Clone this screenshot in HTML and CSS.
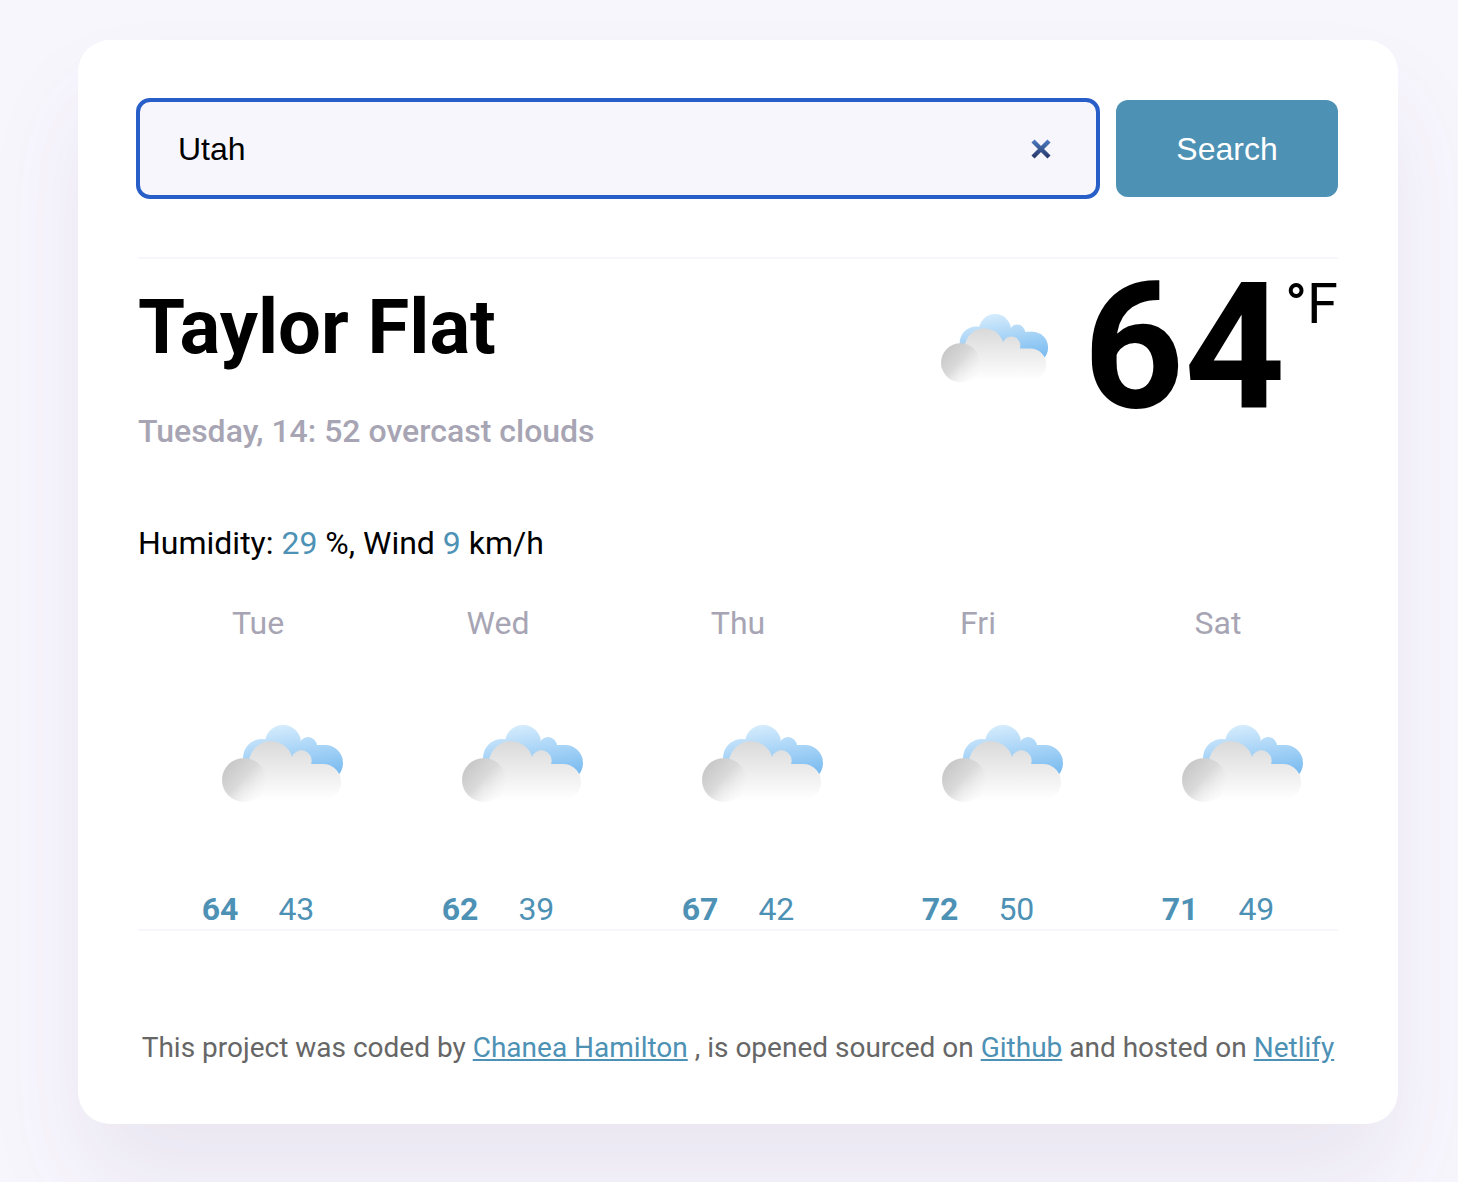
FILE: index.html
```html
<!DOCTYPE html>
<html lang="en">
<head>
  <meta charset="utf-8">
  <meta name="viewport" content="width=device-width, initial-scale=1">
  <title>Weather</title>
  <link rel="stylesheet" href="styles.css">
</head>
<body>
  <svg class="sprite" width="0" height="0" aria-hidden="true">
    <defs>
      <linearGradient id="sky" gradientUnits="userSpaceOnUse" x1="70" y1="0" x2="78" y2="54">
        <stop offset="0" stop-color="#d2eafc"/>
        <stop offset="1" stop-color="#79bbf0"/>
      </linearGradient>
      <linearGradient id="mist" gradientUnits="userSpaceOnUse" x1="0" y1="16" x2="0" y2="75">
        <stop offset="0" stop-color="#d9d9d9"/>
        <stop offset="1" stop-color="#ffffff"/>
      </linearGradient>
      <linearGradient id="puff" gradientUnits="userSpaceOnUse" x1="8" y1="38" x2="38" y2="66">
        <stop offset="0" stop-color="#c8c8c8"/>
        <stop offset="0.5" stop-color="#dadada"/>
        <stop offset="1" stop-color="#f4f4f4" stop-opacity="0.4"/>
      </linearGradient>
    </defs>
    <symbol id="clouds" viewBox="0 0 122 78">
      <g fill="url(#sky)">
        <circle cx="40" cy="33" r="19"/>
        <circle cx="61" cy="18" r="18"/>
        <circle cx="86" cy="21" r="9"/>
        <circle cx="103" cy="38" r="18"/>
        <path d="M44 20h59v36H44z"/>
      </g>
      <g fill="url(#mist)">
        <path d="M27 40A22 22 0 0 1 70 32V40H27z"/>
        <path d="M24 75V50Q24 40 27 38A22 22 0 0 1 70 32A10 10 0 0 1 89 39H101A18 18 0 0 1 101 75z"/>
      </g>
      <circle cx="22" cy="55" r="22" fill="url(#puff)"/>
    </symbol>
  </svg>

  <main class="card">
    <form class="search">
      <div class="search-field">
        <input class="search-input" type="text" value="Utah" aria-label="City">
        <button class="search-clear" type="button" aria-label="Clear">
          <svg viewBox="0 0 22 22" width="22" height="22">
            <defs>
              <linearGradient id="cross" gradientUnits="userSpaceOnUse" x1="0" y1="1" x2="0" y2="21">
                <stop offset="0" stop-color="#4f7fc8"/>
                <stop offset="1" stop-color="#243361"/>
              </linearGradient>
            </defs>
            <path d="M3 3L19 19M19 3L3 19" stroke="url(#cross)" stroke-width="4.4" fill="none"/>
          </svg>
        </button>
      </div>
      <button class="search-button" type="submit">Search</button>
    </form>

    <section class="current">
      <div>
        <h1 class="city">Taylor Flat</h1>
        <p class="conditions">Tuesday, 14: 52 overcast clouds</p>
        <p class="details">Humidity: <span class="accent">29</span> %, Wind <span class="accent">9</span> km/h</p>
      </div>
      <div class="temperature">
        <svg class="temperature-icon" role="img" aria-label="overcast clouds"><use href="#clouds"/></svg>
        <span class="temperature-value">64</span>
        <span class="temperature-unit"><b>°</b>F</span>
      </div>
    </section>

    <section class="forecast">
      <div class="day">
        <div class="day-name">Tue</div>
        <svg class="day-icon"><use href="#clouds"/></svg>
        <div class="day-temps"><strong>64</strong><span>43</span></div>
      </div>
      <div class="day">
        <div class="day-name">Wed</div>
        <svg class="day-icon"><use href="#clouds"/></svg>
        <div class="day-temps"><strong>62</strong><span>39</span></div>
      </div>
      <div class="day">
        <div class="day-name">Thu</div>
        <svg class="day-icon"><use href="#clouds"/></svg>
        <div class="day-temps"><strong>67</strong><span>42</span></div>
      </div>
      <div class="day">
        <div class="day-name">Fri</div>
        <svg class="day-icon"><use href="#clouds"/></svg>
        <div class="day-temps"><strong>72</strong><span>50</span></div>
      </div>
      <div class="day">
        <div class="day-name">Sat</div>
        <svg class="day-icon"><use href="#clouds"/></svg>
        <div class="day-temps"><strong>71</strong><span>49</span></div>
      </div>
    </section>

    <footer class="credits">
      This project was coded by <a href="#">Chanea Hamilton</a> , is opened sourced on <a href="#">Github</a> and hosted on <a href="#">Netlify</a>
    </footer>
  </main>
</body>
</html>
```
FILE: styles.css
```css
* {
  box-sizing: border-box;
}

body {
  margin: 0;
  padding: 40px 60px 58px 78px;
  background: #f8f6fd;
  color: #000;
  font-family: Roboto, sans-serif;
  font-size: 32px;
  line-height: 40px;
}

h1,
p {
  margin: 0;
}

.sprite {
  position: absolute;
}

.card {
  max-width: 1320px;
  margin: 0 auto;
  padding: 60px 60px 58px;
  background: #fff;
  border-radius: 32px;
  box-shadow: 0 60px 100px rgba(65, 50, 100, 0.08);
}

.search {
  display: flex;
  gap: 18px;
  padding-bottom: 60px;
  border-bottom: 2px solid #f8f6fd;
}

.search-field {
  display: flex;
  align-items: center;
  width: 80%;
  height: 97px;
  padding: 0 46px 0 40px;
  background: #f8f6fd;
  border-radius: 12px;
  outline: 4px solid #285ec8;
  outline-offset: -2px;
}

.search-input {
  flex: 1;
  min-width: 0;
  padding: 0;
  border: 0;
  outline: 0;
  background: none;
  color: #000;
  font: 32px/40px "Liberation Sans", Arial, sans-serif;
}

.search-clear {
  display: flex;
  padding: 0;
  border: 0;
  background: none;
}

.search-button {
  flex: 1;
  padding: 0;
  border: 0;
  border-radius: 12px;
  background: #4d91b5;
  color: #fff;
  font: 32px/40px "Liberation Sans", Arial, sans-serif;
}

.current {
  display: flex;
  justify-content: space-between;
  padding-top: 24px;
}

.city {
  font-size: 76px;
  font-weight: 700;
  line-height: 88px;
}

.conditions {
  margin-top: 40px;
  color: #a7a5b4;
  font-weight: 500;
}

.details {
  margin-top: 72px;
}

.accent {
  color: #4d91b5;
}

.temperature {
  display: flex;
  align-items: flex-start;
}

.temperature-icon {
  width: 108px;
  height: 69px;
  margin: 31px 34px 0 0;
}

.temperature-value {
  margin-top: -16px;
  font-size: 176px;
  font-weight: 700;
  line-height: 160px;
}

.temperature-unit {
  margin-top: -8px;
  font-size: 56px;
  line-height: 58px;
}

.forecast {
  display: grid;
  grid-template-columns: repeat(5, 1fr);
  padding-top: 40px;
  border-bottom: 2px solid #f8f6fd;
}

.day {
  display: flex;
  flex-direction: column;
  align-items: center;
}

.day-name {
  color: #a7a5b4;
}

.day-icon {
  width: 122px;
  height: 78px;
  margin: 82px 0 86px 50px;
}

.day-temps {
  display: flex;
  gap: 40px;
  color: #4d91b5;
}

.credits {
  padding-top: 99px;
  color: #666;
  font-size: 28px;
  line-height: 36px;
  text-align: center;
}

.credits a {
  color: #4d91b5;
}
```
